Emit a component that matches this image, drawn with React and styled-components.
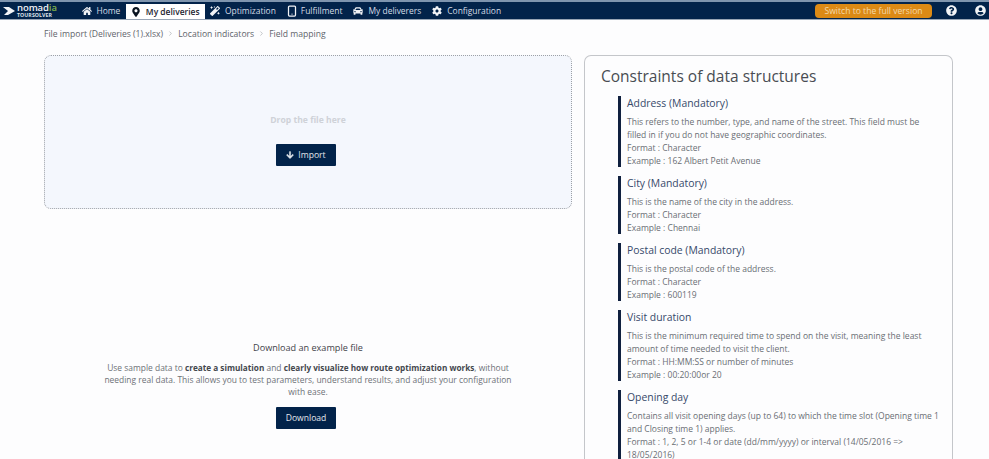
import React from "react"
import styled, { createGlobalStyle } from "styled-components"
import { FaHome, FaMapMarkerAlt, FaMagic, FaCar, FaCog, FaQuestionCircle, FaUserCircle, FaArrowDown } from "react-icons/fa"
import { Smartphone, ChevronRight } from "lucide-react"

const GlobalStyle = createGlobalStyle`
  html, body {
    margin: 0;
    height: 100%;
    overflow: hidden;
    background: #fdfdfe;
    font-family: "Open Sans", "Liberation Sans", sans-serif;
    color: #555b63;
  }
`

const Page = styled.div`
  height: 459px;
  display: flex;
  flex-direction: column;
  overflow: hidden;
`

const Navbar = styled.header`
  flex: none;
  height: 17px;
  padding-right: 3px;
  display: flex;
  align-items: stretch;
  background: #02234a;
  border-top: 2px solid #7f95ae;
  border-bottom: 1px solid #98a5b5;
`

const Logo = styled.div`
  width: 76px;
  display: flex;
  align-items: center;
  padding-left: 3px;
  gap: 1px;
  box-sizing: border-box;
`

const LogoText = styled.div`
  display: flex;
  flex-direction: column;
  line-height: 1;
`

const LogoName = styled.span`
  font-size: 9.5px;
  font-weight: 600;
  color: #f2f4f7;
  line-height: 8px;
  letter-spacing: -0.1px;
  & em {
    font-style: normal;
    color: #7fb24a;
  }
`

const LogoSub = styled.span`
  font-size: 5.2px;
  font-weight: 700;
  color: #dfe4ea;
  line-height: 6px;
  letter-spacing: 0.1px;
`

const NavItem = styled.div`
  display: flex;
  align-items: center;
  gap: 5px;
  padding: 0 ${(p) => (p.$active ? "5px" : "5.5px")};
  font-size: 8.45px;
  font-weight: ${(p) => (p.$active ? 600 : 400)};
  color: ${(p) => (p.$active ? "#1c2430" : "#d5dce5")};
  background: ${(p) => (p.$active ? "#ffffff" : "transparent")};
  margin-top: ${(p) => (p.$active ? "2px" : "0")};
  white-space: nowrap;
  & svg {
    color: ${(p) => (p.$active ? "#0a1420" : "#f2f4f7")};
    flex: none;
  }
`

const PhoneIcon = styled(Smartphone)`
  margin: 0 -2px 0 -1px;
`

const NavRight = styled.div`
  margin-left: auto;
  display: flex;
  align-items: center;
`

const SwitchButton = styled.button`
  width: 117px;
  height: 14px;
  padding: 0;
  border: 0;
  border-radius: 4px;
  background: #dc8a15;
  color: #f3d9ac;
  font-family: inherit;
  font-size: 8.6px;
  margin-right: 14px;
`

const IconSlot = styled.span`
  display: flex;
  color: #f2f4f7;
  margin-left: ${(p) => p.$gap || 0}px;
`

const Breadcrumb = styled.nav`
  flex: none;
  height: 26px;
  padding: 1px 0 0 44px;
  display: flex;
  align-items: center;
  gap: 4px;
  font-size: 8.6px;
  color: #5f646b;
  box-sizing: border-box;
  & svg {
    color: #9a9ea3;
  }
`

const Content = styled.main`
  margin-top: 9px;
  padding-left: 44px;
  display: grid;
  grid-template-columns: 528px 369px;
  column-gap: 12px;
  align-items: start;
`

const LeftColumn = styled.section`
  display: flex;
  flex-direction: column;
`

const DropZone = styled.div`
  height: 154px;
  box-sizing: border-box;
  border: 1px dotted #9da1a7;
  border-radius: 7px;
  background: #f4f7fd;
  display: flex;
  flex-direction: column;
  align-items: center;
  padding-top: 58px;
`

const DropHint = styled.div`
  font-size: 8.6px;
  font-weight: 700;
  color: #cfd2d8;
  line-height: 13px;
`

const DarkButton = styled.button`
  width: 60px;
  height: 22px;
  padding: 0;
  margin-right: 4px;
  display: flex;
  align-items: center;
  justify-content: center;
  gap: 4px;
  border: 0;
  border-radius: 1px;
  background: #02234a;
  color: #e3e7ec;
  font-family: inherit;
  font-size: 8.6px;
`

const ImportButton = styled(DarkButton)`
  margin-top: 17px;
`

const ArrowIcon = styled(FaArrowDown)`
  stroke: currentColor;
  stroke-width: 30px;
`

const Example = styled.div`
  margin-top: 132px;
  display: flex;
  flex-direction: column;
  align-items: center;
  text-align: center;
`

const ExampleTitle = styled.h3`
  margin: 0;
  font-size: 9.1px;
  font-weight: 400;
  line-height: 14px;
  color: #3f4349;
`

const ExampleText = styled.p`
  margin: 7px 0 9px;
  width: 414px;
  font-size: 8.45px;
  line-height: 12px;
  color: #6d7177;
  & b {
    font-weight: 700;
    font-size: 8.2px;
    color: #43474d;
  }
`

const Panel = styled.aside`
  height: 420px;
  box-sizing: border-box;
  border: 1px solid #c4c6ca;
  border-bottom: 0;
  border-radius: 7px 7px 0 0;
  padding: 10px 16px 0 16px;
  overflow: hidden;
  background: #fdfdfe;
`

const PanelTitle = styled.h2`
  margin: 0 0 9px;
  font-size: 15.5px;
  font-weight: 400;
  line-height: 21px;
  color: #484c52;
`

const Constraint = styled.div`
  margin: 0 0 9px 17px;
  padding-left: 6px;
  border-left: 3px solid #10203f;
`

const ConstraintName = styled.h4`
  margin: 0 0 5px;
  font-size: 10.4px;
  font-weight: 400;
  line-height: 14px;
  color: #37496a;
`

const ConstraintLine = styled.div`
  font-size: 8.5px;
  line-height: 13px;
  color: #6a6e74;
  width: 313px;
`

const constraints = [
  {
    name: "Address (Mandatory)",
    lines: [
      "This refers to the number, type, and name of the street. This field must be filled in if you do not have geographic coordinates.",
      "Format : Character",
      "Example : 162 Albert Petit Avenue",
    ],
  },
  {
    name: "City (Mandatory)",
    lines: ["This is the name of the city in the address.", "Format : Character", "Example : Chennai"],
  },
  {
    name: "Postal code (Mandatory)",
    lines: ["This is the postal code of the address.", "Format : Character", "Example : 600119"],
  },
  {
    name: "Visit duration",
    lines: [
      "This is the minimum required time to spend on the visit, meaning the least amount of time needed to visit the client.",
      "Format : HH:MM:SS or number of minutes",
      "Example : 00:20:00or 20",
    ],
  },
  {
    name: "Opening day",
    lines: [
      "Contains all visit opening days (up to 64) to which the time slot (Opening time 1 and Closing time 1) applies.",
      "Format : 1, 2, 5 or 1-4 or date (dd/mm/yyyy) or interval (14/05/2016 => 18/05/2016)",
    ],
  },
]

const navItems = [
  { label: "Home", icon: <FaHome size={10} /> },
  { label: "My deliveries", icon: <FaMapMarkerAlt size={10} />, active: true },
  { label: "Optimization", icon: <FaMagic size={10} /> },
  { label: "Fulfillment", icon: <PhoneIcon size={12} strokeWidth={2.5} /> },
  { label: "My deliverers", icon: <FaCar size={10} /> },
  { label: "Configuration", icon: <FaCog size={10} /> },
]

export default function App() {
  return (
    <Page>
      <GlobalStyle />
      <Navbar>
        <Logo>
          <svg width="13" height="10" viewBox="0 0 13 10">
            <path d="M0 1 L6 1 L12 5 L5 9 L1 9 L5 5 Z" fill="#f2f4f7" />
          </svg>
          <LogoText>
            <LogoName>
              nomad<em>ia</em>
            </LogoName>
            <LogoSub>TOURSOLVER</LogoSub>
          </LogoText>
        </Logo>
        {navItems.map((item) => (
          <NavItem key={item.label} $active={item.active}>
            {item.icon}
            {item.label}
          </NavItem>
        ))}
        <NavRight>
          <SwitchButton>Switch to the full version</SwitchButton>
          <IconSlot>
            <FaQuestionCircle size={11} />
          </IconSlot>
          <IconSlot $gap={18}>
            <FaUserCircle size={11} />
          </IconSlot>
        </NavRight>
      </Navbar>
      <Breadcrumb>
        File import (Deliveries (1).xlsx)
        <ChevronRight size={7} />
        Location indicators
        <ChevronRight size={7} />
        Field mapping
      </Breadcrumb>
      <Content>
        <LeftColumn>
          <DropZone>
            <DropHint>Drop the file here</DropHint>
            <ImportButton>
              <ArrowIcon size={8} />
              Import
            </ImportButton>
          </DropZone>
          <Example>
            <ExampleTitle>Download an example file</ExampleTitle>
            <ExampleText>
              Use sample data to <b>create a simulation</b> and <b>clearly visualize how route optimization works</b>,
              without needing real data. This allows you to test parameters, understand results, and adjust your
              configuration with ease.
            </ExampleText>
            <DarkButton>Download</DarkButton>
          </Example>
        </LeftColumn>
        <Panel>
          <PanelTitle>Constraints of data structures</PanelTitle>
          {constraints.map((c) => (
            <Constraint key={c.name}>
              <ConstraintName>{c.name}</ConstraintName>
              {c.lines.map((line) => (
                <ConstraintLine key={line}>{line}</ConstraintLine>
              ))}
            </Constraint>
          ))}
        </Panel>
      </Content>
    </Page>
  )
}
